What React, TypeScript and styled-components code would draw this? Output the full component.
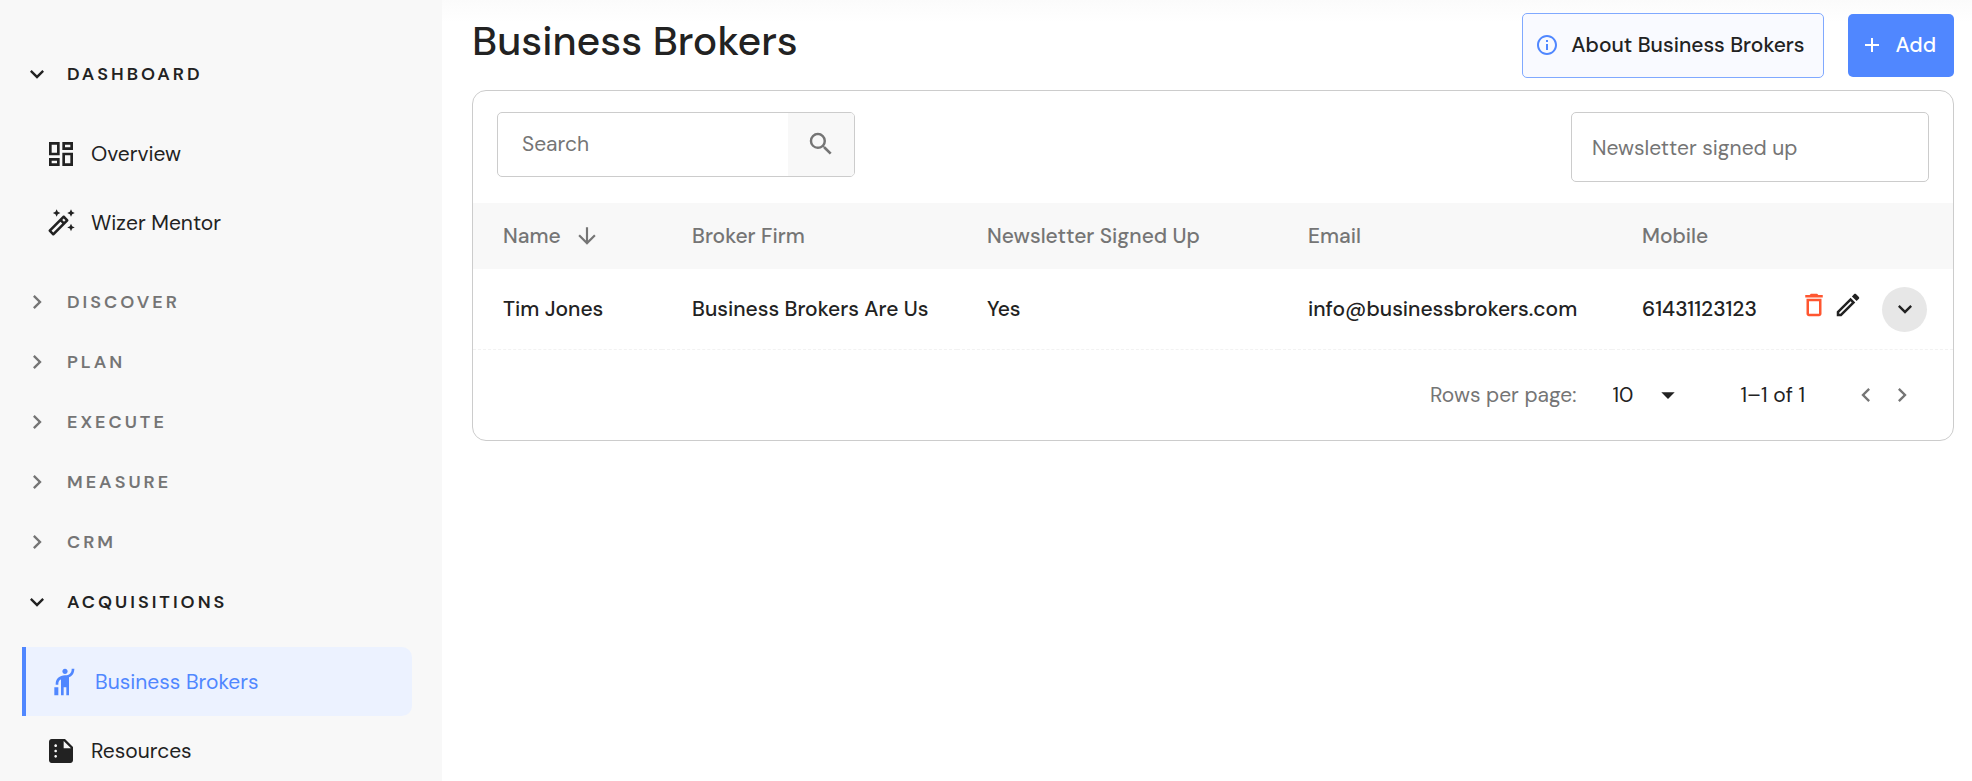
import React from 'react';
import styled, { createGlobalStyle } from 'styled-components';
import {
  MdAdd,
  MdArrowDownward,
  MdArrowDropDown,
  MdDeleteOutline,
  MdHail,
  MdInfoOutline,
  MdKeyboardArrowDown,
  MdKeyboardArrowLeft,
  MdKeyboardArrowRight,
  MdOutlineDashboard,
  MdOutlineEdit,
  MdSearch,
  MdSummarize,
} from 'react-icons/md';

const ink = '#222222';
const muted = '#757575';
const blue = '#5087ff';
const line = '#cccccc';
const shade = '#f8f8f8';

const GlobalStyle = createGlobalStyle`
  *, *::before, *::after { box-sizing: border-box; }
  body {
    margin: 0;
    background: #ffffff;
    color: ${ink};
    font-family: "DM Sans", "Open Sans", "Liberation Sans", sans-serif;
    font-size: 21px;
    line-height: 28px;
  }
  button, input, select { font: inherit; color: inherit; }
  button { cursor: pointer; }
  svg { display: block; flex: none; }
`;

const Page = styled.div`
  display: grid;
  grid-template-columns: 442px minmax(0, 1fr);
  height: 100vh;
`;

const Sidebar = styled.nav`
  padding: 44px 30px 0 22px;
  background: ${shade};
  overflow-y: auto;
  scrollbar-width: none;
`;

const SectionToggle = styled.button<{ $open: boolean }>`
  display: flex;
  align-items: center;
  gap: 16px;
  width: 100%;
  height: 60px;
  padding: 0 1px;
  border: 0;
  background: none;
  color: ${(p) => (p.$open ? ink : muted)};
  font-size: 18px;
  font-weight: 600;
  letter-spacing: 3px;
  text-transform: uppercase;
`;

const SectionList = styled.ul`
  margin: 0;
  padding: 15px 0;
  list-style: none;
`;

const NavLink = styled.a<{ $active?: boolean }>`
  display: flex;
  align-items: center;
  gap: 14px;
  height: 69px;
  padding-left: 23px;
  border-left: ${(p) => (p.$active ? `4px solid ${blue}` : '0')};
  border-radius: 0 10px 10px 0;
  background: ${(p) => (p.$active ? '#ecf2ff' : 'transparent')};
  color: ${(p) => (p.$active ? blue : ink)};
  text-decoration: none;
`;

const NavIcon = styled.span`
  display: grid;
  place-items: center;
  width: 32px;
  height: 32px;
`;

const Main = styled.main`
  padding: 13px 18px 24px 30px;
  background: linear-gradient(#fbfbfb, #ffffff 22px);
`;

const PageHeader = styled.header`
  display: flex;
  align-items: center;
  gap: 24px;
  margin-bottom: 12px;
`;

const Title = styled.h1`
  flex: 1;
  margin: 0;
  padding-bottom: 10px;
  font-size: 41px;
  line-height: 52px;
  font-weight: 500;
`;

const AboutButton = styled.button`
  display: flex;
  align-items: center;
  gap: 12px;
  height: 65px;
  padding: 0 18px 2px 12px;
  border: 1px solid #80a9ff;
  border-radius: 5px;
  background: #f9faff;
  font-weight: 500;

  svg { color: ${blue}; }
`;

const AddButton = styled.button`
  display: flex;
  align-items: center;
  gap: 12px;
  height: 63px;
  padding: 0 18px 2px 12px;
  border: 0;
  border-radius: 5px;
  background: ${blue};
  color: #ffffff;
  font-weight: 500;
`;

const Card = styled.section`
  border: 1px solid ${line};
  border-radius: 14px;
  background: #ffffff;
`;

const Filters = styled.div`
  display: flex;
  align-items: flex-start;
  justify-content: space-between;
  gap: 24px;
  padding: 21px 24px;
`;

const SearchBox = styled.form`
  display: flex;
  width: 358px;
  height: 65px;
  border: 1px solid ${line};
  border-radius: 5px;
  overflow: hidden;
`;

const SearchInput = styled.input`
  flex: 1;
  min-width: 0;
  padding: 0 24px 2px;
  border: 0;
  background: none;

  &::placeholder { color: ${muted}; opacity: 1; }
`;

const SearchButton = styled.button`
  display: grid;
  place-items: center;
  width: 66px;
  padding: 0 0 2px;
  border: 0;
  background: ${shade};
  color: ${muted};
`;

const FilterInput = styled.input`
  width: 358px;
  height: 70px;
  padding: 2px 20px 0;
  border: 1px solid ${line};
  border-radius: 5px;
  background: #ffffff;

  &::placeholder { color: ${muted}; opacity: 1; }
`;

const Table = styled.table`
  width: 100%;
  border-collapse: separate;
  border-spacing: 0;
  text-align: left;
`;

const Column = styled.col<{ $width: number }>`
  width: ${(p) => p.$width}px;
`;

const HeadCell = styled.th`
  height: 66px;
  padding: 0 0 0 30px;
  background: ${shade};
  color: ${muted};
  font-weight: 500;
  white-space: nowrap;
`;

const SortButton = styled.button`
  display: flex;
  align-items: center;
  gap: 13px;
  padding: 0;
  border: 0;
  background: none;
`;

const Cell = styled.td`
  height: 81px;
  padding: 0 0 0 30px;
  border-bottom: 1px dashed #f2f2f2;
  font-weight: 500;
  white-space: nowrap;
`;

const ActionsCell = styled(Cell)`
  padding: 0;
`;

const Actions = styled.div`
  display: flex;
  align-items: center;
  gap: 4px;
`;

const IconButton = styled.button<{ $color?: string }>`
  display: grid;
  place-items: center;
  margin-bottom: 8px;
  padding: 0;
  border: 0;
  background: none;
  color: ${(p) => p.$color ?? ink};
`;

const ExpandButton = styled.button`
  display: grid;
  place-items: center;
  width: 45px;
  height: 45px;
  margin-left: 15px;
  padding: 0;
  border: 0;
  border-radius: 50%;
  background: #e7e7e7;
`;

const Pagination = styled.footer`
  display: flex;
  align-items: center;
  justify-content: flex-end;
  height: 90px;
  padding-right: 37px;
`;

const RowsLabel = styled.label`
  margin-right: 36px;
  color: ${muted};
`;

const SelectWrap = styled.div`
  display: grid;
  grid-template-columns: 39px 32px;
  align-items: center;
  margin-right: 57px;

  svg {
    grid-area: 1 / 2;
    pointer-events: none;
  }
`;

const RowsSelect = styled.select`
  grid-area: 1 / 1 / 2 / 3;
  height: 40px;
  padding: 0;
  border: 0;
  background: none;
  appearance: none;
`;

const PageButtons = styled.div`
  display: flex;
  gap: 8px;
  margin-left: 47px;
`;

const PageButton = styled.button`
  padding: 0;
  border: 0;
  background: none;
  color: ${muted};
`;

const WandIcon = () => (
  <svg width="30" height="30" viewBox="0 0 24 24" fill="currentColor" aria-hidden="true">
    <path d="m20 7 .94-2.06L23 4l-2.06-.94L20 1l-.94 2.06L17 4l2.06.94zM8.5 7l.94-2.06L11.5 4l-2.06-.94L8.5 1l-.94 2.06L5.5 4l2.06.94zM20 12.5l-.94 2.06-2.06.94 2.06.94.94 2.06.94-2.06L23 15.5l-2.06-.94zm-2.29-3.38-2.83-2.83c-.2-.19-.45-.29-.71-.29s-.51.1-.71.29L2.29 17.46c-.39.39-.39 1.02 0 1.41l2.83 2.83c.2.2.45.3.71.3s.51-.1.71-.29l11.17-11.17c.39-.39.39-1.03 0-1.42zm-3.54-.7 1.41 1.41L14.41 11 13 9.59l1.17-1.17zM5.83 19.59l-1.41-1.41L11.59 11 13 12.41l-7.17 7.18z" />
  </svg>
);

type Link = { label: string; icon: React.ReactNode; active?: boolean };
type Section = { label: string; links?: Link[] };

const sections: Section[] = [
  {
    label: 'Dashboard',
    links: [
      { label: 'Overview', icon: <MdOutlineDashboard size={32} /> },
      { label: 'Wizer Mentor', icon: <WandIcon /> },
    ],
  },
  { label: 'Discover' },
  { label: 'Plan' },
  { label: 'Execute' },
  { label: 'Measure' },
  { label: 'CRM' },
  {
    label: 'Acquisitions',
    links: [
      { label: 'Business Brokers', icon: <MdHail size={32} />, active: true },
      { label: 'Resources', icon: <MdSummarize size={32} /> },
    ],
  },
];

const columnWidths = [189, 295, 321, 334, 187, 154];

export default function App() {
  return (
    <>
      <GlobalStyle />
      <Page>
        <Sidebar aria-label="Main">
          {sections.map(({ label, links }) => (
            <div key={label}>
              <SectionToggle type="button" $open={!!links} aria-expanded={!!links}>
                {links ? <MdKeyboardArrowDown size={28} /> : <MdKeyboardArrowRight size={28} />}
                {label}
              </SectionToggle>
              {links && (
                <SectionList>
                  {links.map((link) => (
                    <li key={link.label}>
                      <NavLink href="#" $active={link.active} aria-current={link.active ? 'page' : undefined}>
                        <NavIcon>{link.icon}</NavIcon>
                        {link.label}
                      </NavLink>
                    </li>
                  ))}
                </SectionList>
              )}
            </div>
          ))}
        </Sidebar>

        <Main>
          <PageHeader>
            <Title>Business Brokers</Title>
            <AboutButton type="button">
              <MdInfoOutline size={24} />
              About Business Brokers
            </AboutButton>
            <AddButton type="button">
              <MdAdd size={24} />
              Add
            </AddButton>
          </PageHeader>

          <Card>
            <Filters>
              <SearchBox role="search">
                <SearchInput type="text" placeholder="Search" aria-label="Search" />
                <SearchButton type="button" aria-label="Search">
                  <MdSearch size={30} />
                </SearchButton>
              </SearchBox>
              <FilterInput type="text" placeholder="Newsletter signed up" aria-label="Newsletter signed up" />
            </Filters>

            <Table>
              <colgroup>
                {columnWidths.map((width, i) => (
                  <Column key={i} $width={width} />
                ))}
              </colgroup>
              <thead>
                <tr>
                  <HeadCell scope="col" aria-sort="ascending">
                    <SortButton type="button">
                      Name
                      <MdArrowDownward size={26} />
                    </SortButton>
                  </HeadCell>
                  <HeadCell scope="col">Broker Firm</HeadCell>
                  <HeadCell scope="col">Newsletter Signed Up</HeadCell>
                  <HeadCell scope="col">Email</HeadCell>
                  <HeadCell scope="col">Mobile</HeadCell>
                  <HeadCell scope="col" aria-label="Actions" />
                </tr>
              </thead>
              <tbody>
                <tr>
                  <Cell>Tim Jones</Cell>
                  <Cell>Business Brokers Are Us</Cell>
                  <Cell>Yes</Cell>
                  <Cell>info@businessbrokers.com</Cell>
                  <Cell>61431123123</Cell>
                  <ActionsCell>
                    <Actions>
                      <IconButton type="button" $color="#ff5630" aria-label="Delete">
                        <MdDeleteOutline size={30} />
                      </IconButton>
                      <IconButton type="button" aria-label="Edit">
                        <MdOutlineEdit size={30} />
                      </IconButton>
                      <ExpandButton type="button" aria-label="Show details">
                        <MdKeyboardArrowDown size={28} />
                      </ExpandButton>
                    </Actions>
                  </ActionsCell>
                </tr>
              </tbody>
            </Table>

            <Pagination>
              <RowsLabel htmlFor="rows-per-page">Rows per page:</RowsLabel>
              <SelectWrap>
                <RowsSelect id="rows-per-page" defaultValue="10">
                  <option value="10">10</option>
                  <option value="25">25</option>
                  <option value="50">50</option>
                </RowsSelect>
                <MdArrowDropDown size={32} />
              </SelectWrap>
              <span>1–1 of 1</span>
              <PageButtons>
                <PageButton type="button" aria-label="Previous page">
                  <MdKeyboardArrowLeft size={28} />
                </PageButton>
                <PageButton type="button" aria-label="Next page">
                  <MdKeyboardArrowRight size={28} />
                </PageButton>
              </PageButtons>
            </Pagination>
          </Card>
        </Main>
      </Page>
    </>
  );
}
